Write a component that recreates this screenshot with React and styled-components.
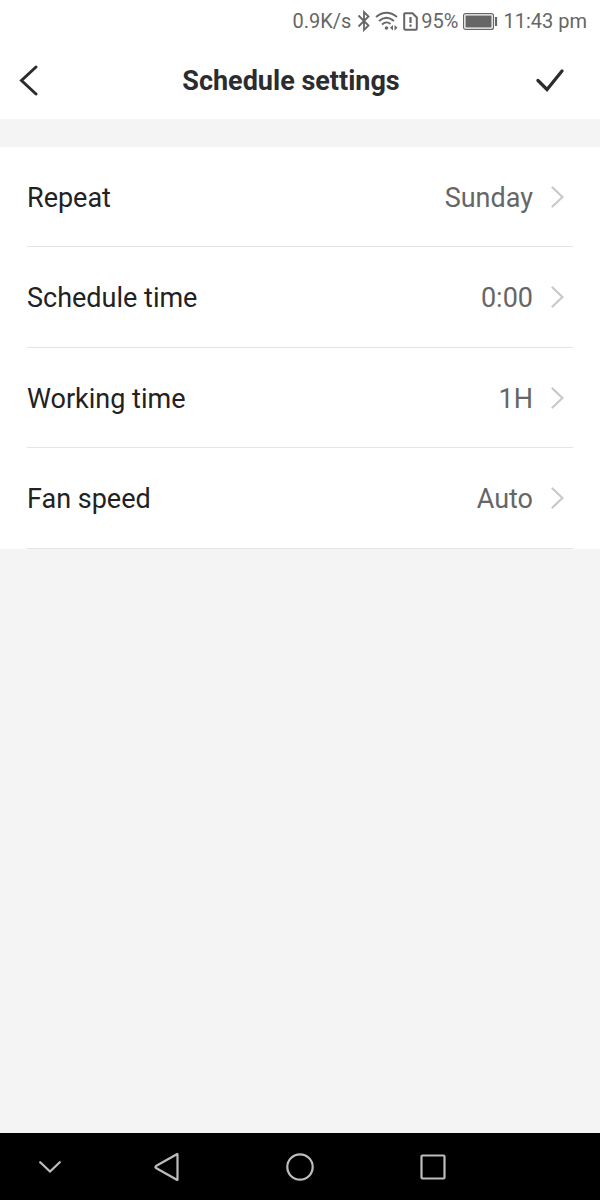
import React from "react";
import styled, { createGlobalStyle } from "styled-components";

const GlobalStyle = createGlobalStyle`
  * {
    box-sizing: border-box;
  }
  body {
    margin: 0;
    background: #f4f4f4;
    font-family: Roboto, "Liberation Sans", sans-serif;
  }
  button {
    border: 0;
    padding: 0;
    background: none;
    font: inherit;
    color: inherit;
    cursor: pointer;
  }
  svg {
    display: block;
    flex: none;
    fill: none;
    stroke: currentColor;
  }
`;

const Screen = styled.div`
  min-height: 100vh;
  display: flex;
  flex-direction: column;
`;

const StatusBar = styled.div`
  height: 42px;
  padding-right: 13px;
  display: flex;
  justify-content: flex-end;
  align-items: center;
  gap: 5px;
  background: white;
  color: #666;
  font-size: 20px;
  line-height: 24px;
`;

const StatusGroup = styled.div`
  display: flex;
  align-items: center;
  gap: ${({ $gap }) => $gap}px;
`;

const Header = styled.header`
  height: 77px;
  padding-right: 18px;
  display: grid;
  grid-template-columns: 1fr auto 1fr;
  align-items: center;
  background: white;
  color: #2c2c2e;
`;

const HeaderButton = styled.button`
  width: ${({ $end }) => ($end ? "64px" : "58px")};
  height: 64px;
  display: flex;
  justify-content: center;
  align-items: center;
  justify-self: ${({ $end }) => ($end ? "end" : "start")};
`;

const Title = styled.h1`
  margin: 0;
  font-size: 27px;
  line-height: 32px;
  font-weight: 700;
`;

const SettingsList = styled.main`
  margin-top: 28px;
  display: grid;
  grid-template-rows: repeat(2, 100px 101px);
  background: white;
`;

const Row = styled.button`
  margin: 0 27px;
  display: flex;
  align-items: center;
  border-bottom: 1px solid #e4e4e4;
  font-size: 27px;
  line-height: 32px;
  text-align: left;
`;

const RowLabel = styled.span`
  flex: 1;
  padding-top: 2px;
  color: #222;
`;

const RowValue = styled.span`
  padding-top: 2px;
  color: #666;
`;

const RowArrow = styled.svg`
  margin: 0 9px 0 18px;
  color: #c8c8c8;
`;

const NavBar = styled.nav`
  height: 67px;
  margin-top: auto;
  display: grid;
  grid-template-columns: 3fr 4fr 4fr 4fr 3fr;
  background: black;
  color: #bdbdbd;
`;

const NavButton = styled.button`
  display: flex;
  justify-content: center;
  align-items: center;
`;

const settings = [
  { label: "Repeat", value: "Sunday" },
  { label: "Schedule time", value: "0:00" },
  { label: "Working time", value: "1H" },
  { label: "Fan speed", value: "Auto" },
];

const BluetoothIcon = () => (
  <svg width="13" height="22" viewBox="0 0 13 22" strokeWidth="1.8">
    <path d="M1.500 5.500l10 10L7 20V2l4.500 4.500l-10 10" />
  </svg>
);

const WifiIcon = () => (
  <svg width="23" height="20" viewBox="0 0 23 20" strokeWidth="1.900">
    <path d="M1 6Q11.500 -2.500 22 6M4 10Q11.500 3.500 19 10M7 13.500Q11.500 9.500 15.500 13" />
    <circle cx="11.500" cy="17" r="1.800" fill="currentColor" stroke="none" />
    <path
      d="M18 14v5.500l-3-2.750zM19.500 14v5.500l3-2.750z"
      fill="currentColor"
      stroke="none"
    />
  </svg>
);

const SimIcon = () => (
  <svg width="15" height="19" viewBox="0 0 15 19" strokeWidth="2">
    <path d="M2 1.200h7.500L13.800 5.500V16.500q0 1.200-1.200 1.200H2.400q-1.200 0-1.200-1.200V2q0-.8.8-.8z" />
    <path d="M7.500 5v6M7.500 12.500v2.200" strokeWidth="2.200" />
  </svg>
);

const BatteryIcon = () => (
  <svg width="35" height="17" viewBox="0 0 35 17">
    <rect x=".6" y=".6" width="29.800" height="15.800" rx="2" strokeWidth="1.200" />
    <rect x="2.500" y="2.500" width="26" height="12" fill="currentColor" stroke="none" />
    <path d="M33 4v9" strokeWidth="2.200" />
  </svg>
);

function App() {
  return (
    <>
      <GlobalStyle />
      <Screen>
        <StatusBar>
          <StatusGroup $gap={6}>
            <span>0.9K/s</span>
            <BluetoothIcon />
          </StatusGroup>
          <WifiIcon />
          <StatusGroup $gap={3}>
            <SimIcon />
            <span>95%</span>
          </StatusGroup>
          <BatteryIcon />
          <span>11:43 pm</span>
        </StatusBar>
        <Header>
          <HeaderButton aria-label="Back">
            <svg width="20" height="32" viewBox="0 0 20 32" strokeWidth="3">
              <path d="M17 2L2.500 15.500L17 29" strokeLinecap="round" />
            </svg>
          </HeaderButton>
          <Title>Schedule settings</Title>
          <HeaderButton $end aria-label="Save">
            <svg width="28" height="24" viewBox="0 0 28 24" strokeWidth="3.2">
              <path d="M2 11.500L11 20.500L26 2" strokeLinecap="round" />
            </svg>
          </HeaderButton>
        </Header>
        <SettingsList>
          {settings.map(({ label, value }) => (
            <Row key={label}>
              <RowLabel>{label}</RowLabel>
              <RowValue>{value}</RowValue>
              <RowArrow width="13" height="22" viewBox="0 0 13 22" strokeWidth="2.2">
                <path d="M1.500 1.500L11.500 11L1.500 20.500" strokeLinecap="round" />
              </RowArrow>
            </Row>
          ))}
        </SettingsList>
        <NavBar>
          <NavButton aria-label="Hide navigation">
            <svg width="22" height="12" viewBox="0 0 22 12" strokeWidth="2.2">
              <path d="M1.200 1.200L11 10.500L20.800 1.200" strokeLinecap="round" />
            </svg>
          </NavButton>
          <NavButton aria-label="Back">
            <svg width="26" height="28" viewBox="0 0 26 28" strokeWidth="2.2">
              <path
                d="M23.500 1.500V26.500Q23.500 27.200 22.800 26.800L2 15Q.8 14 2 13L22.800 1.200Q23.500 .8 23.500 1.500z"
                strokeLinejoin="round"
              />
            </svg>
          </NavButton>
          <NavButton aria-label="Home">
            <svg width="28" height="28" viewBox="0 0 28 28" strokeWidth="2.2">
              <circle cx="14" cy="14" r="12.700" />
            </svg>
          </NavButton>
          <NavButton aria-label="Recent apps">
            <svg width="26" height="26" viewBox="0 0 26 26" strokeWidth="2.2">
              <rect x="1.500" y="1.500" width="23" height="23" rx="1" />
            </svg>
          </NavButton>
        </NavBar>
      </Screen>
    </>
  );
}

export default App;
